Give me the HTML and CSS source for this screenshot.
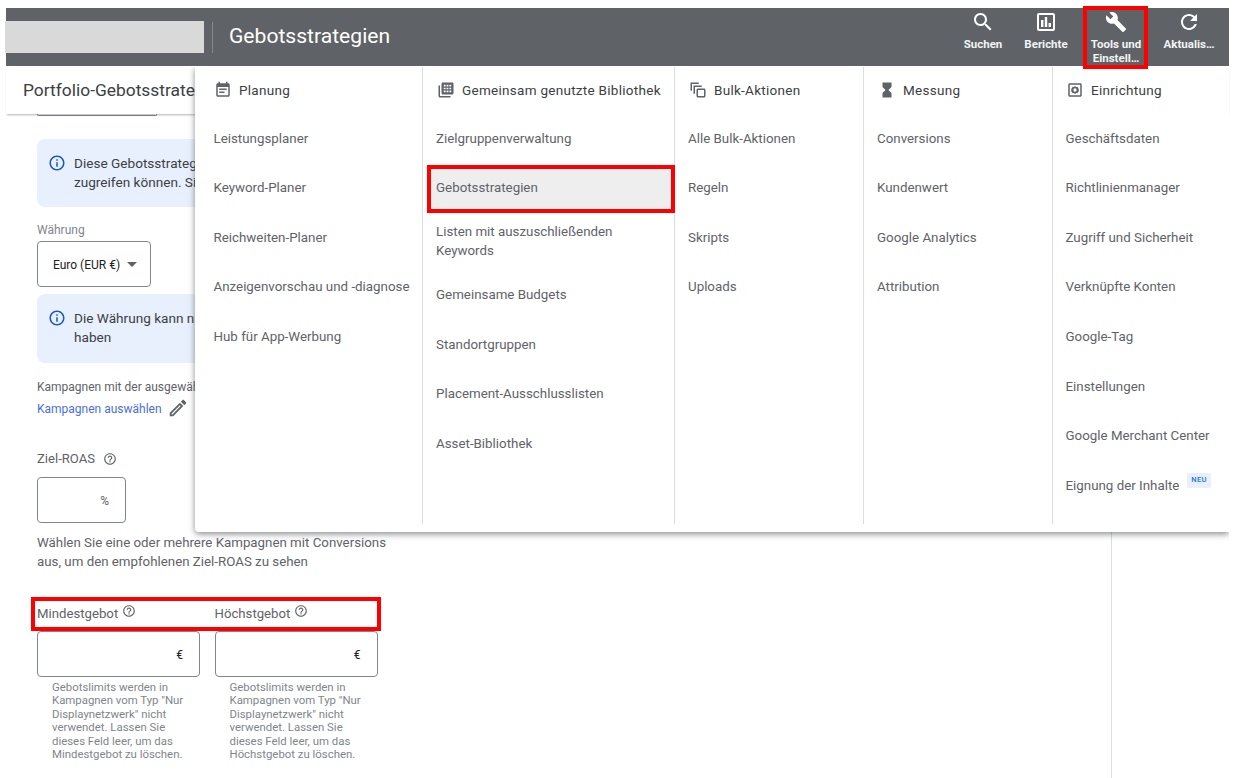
FILE: index.html
```html
<!DOCTYPE html>
<html lang="de">
<head>
<meta charset="utf-8">
<title>Gebotsstrategien</title>
<link rel="stylesheet" href="styles.css">
</head>
<body>
<svg class="sprite" width="0" height="0" aria-hidden="true">
  <symbol id="i-search" viewBox="0 0 24 24"><path d="M15.5 14h-.79l-.28-.27C15.41 12.59 16 11.11 16 9.5 16 5.91 13.09 3 9.5 3S3 5.91 3 9.5 5.91 16 9.5 16c1.61 0 3.09-.59 4.23-1.57l.27.28v.79l5 4.99L20.49 19l-4.99-5zm-6 0C7.01 14 5 11.99 5 9.5S7.01 5 9.5 5 14 7.01 14 9.5 11.99 14 9.5 14z"/></symbol>
  <symbol id="i-report" viewBox="0 0 24 24"><path d="M19 3H5c-1.1 0-2 .9-2 2v14c0 1.1.9 2 2 2h14c1.1 0 2-.9 2-2V5c0-1.1-.9-2-2-2zm0 16H5V5h14v14zM7 10h2.400v7H7zM10.800 7h2.400v10h-2.400zM14.600 13H17v4h-2.400z"/></symbol>
  <symbol id="i-build" viewBox="0 0 24 24"><path d="M22.7 19l-9.1-9.1c.9-2.3.4-5-1.5-6.9-2-2-5-2.4-7.4-1.3L9 6 6 9 1.6 4.7C.4 7.1.9 10.1 2.9 12.1c1.9 1.9 4.6 2.4 6.9 1.5l9.1 9.1c.4.4 1 .4 1.4 0l2.3-2.3c.5-.4.5-1.1.1-1.4z"/></symbol>
  <symbol id="i-refresh" viewBox="0 0 24 24"><path d="M17.65 6.35C16.2 4.9 14.21 4 12 4c-4.42 0-7.99 3.58-7.99 8s3.57 8 7.99 8c3.73 0 6.84-2.55 7.73-6h-2.08c-.82 2.33-3.04 4-5.65 4-3.31 0-6-2.69-6-6s2.69-6 6-6c1.66 0 3.14.69 4.22 1.78L13 11h7V4l-2.35 2.35z"/></symbol>
  <symbol id="i-plan" viewBox="0 0 24 24"><path d="M17 10H7v2h10v-2zm2-7h-1V1h-2v2H8V1H6v2H5c-1.11 0-1.99.9-1.99 2L3 19c0 1.1.89 2 2 2h14c1.1 0 2-.9 2-2V5c0-1.1-.9-2-2-2zm0 16H5V8h14v11zm-5-5H7v2h7v-2z"/></symbol>
  <symbol id="i-library" viewBox="0 0 24 24"><path d="M4 6H2v14c0 1.1.9 2 2 2h14v-2H4V6zM20 2H8c-1.1 0-2 .9-2 2v12c0 1.1.9 2 2 2h12c1.1 0 2-.9 2-2V4c0-1.1-.9-2-2-2zM9 5h2.5v2.2H9zm3.8 0h2.4v2.2h-2.4zm3.7 0H19v2.2h-2.5zM9 8.9h2.5v2.2H9zm3.8 0h2.4v2.2h-2.4zm3.7 0H19v2.2h-2.5zM9 12.8h2.5V15H9zm3.8 0h2.4V15h-2.4zm3.7 0H19V15h-2.5z" fill-rule="evenodd"/></symbol>
  <symbol id="i-bulk" viewBox="0 0 24 24"><path d="M12 10h8c1.1 0 2 .9 2 2v8c0 1.1-.9 2-2 2h-8c-1.1 0-2-.9-2-2v-8c0-1.100.9-2 2-2zm0 2v8h8v-8h-8zM6 6h11v2H8v9H6V6zM2 2h11v2H4v9H2V2z" fill-rule="evenodd"/></symbol>
  <symbol id="i-hourglass" viewBox="0 0 24 24"><path d="M6 2v6h.01L6 8.010 10 12l-4 4 .01.01H6V22h12v-5.990h-.01L18 16l-4-4 4-3.990-.01-.01H18V2H6z"/></symbol>
  <symbol id="i-setup" viewBox="0 0 24 24"><path d="M5 3h14c1.100 0 2 .9 2 2v14c0 1.100-.9 2-2 2H5c-1.100 0-2-.9-2-2V5c0-1.100.9-2 2-2zm0 2v14h14V5H5z" fill-rule="evenodd"/><path d="M12 6.500l1.300 1.500 2-.4.7 1.900 1.500 1.200-.9 1.300.9 1.300-1.500 1.200-.7 1.900-2-.4-1.300 1.500-1.300-1.500-2 .4-.7-1.900-1.500-1.200.9-1.300-.9-1.300 1.500-1.200.7-1.900 2 .4L12 6.500zM12 9.800a2.200 2.200 0 1 0 0 4.400 2.200 2.200 0 0 0 0-4.400z" fill-rule="evenodd"/></symbol>
  <symbol id="i-info" viewBox="0 0 24 24"><path d="M11 7h2v2h-2zm0 4h2v6h-2zm1-9C6.480 2 2 6.480 2 12s4.480 10 10 10 10-4.480 10-10S17.520 2 12 2zm0 18c-4.410 0-8-3.590-8-8s3.590-8 8-8 8 3.590 8 8-3.590 8-8 8z"/></symbol>
  <symbol id="i-help" viewBox="0 0 24 24"><path d="M11 18h2v-2h-2v2zm1-16C6.480 2 2 6.480 2 12s4.480 10 10 10 10-4.480 10-10S17.520 2 12 2zm0 18c-4.410 0-8-3.590-8-8s3.590-8 8-8 8 3.590 8 8-3.590 8-8 8zm0-14c-2.210 0-4 1.790-4 4h2c0-1.100.9-2 2-2s2 .9 2 2c0 2-3 1.750-3 5h2c0-2.250 3-2.500 3-5 0-2.210-1.790-4-4-4z"/></symbol>
  <symbol id="i-edit" viewBox="0 0 24 24"><path d="M14.060 9.020l.92.92L5.920 19H5v-.92l9.060-9.060M17.660 3c-.25 0-.51.1-.7.29l-1.830 1.830 3.750 3.750 1.830-1.830c.39-.39.39-1.020 0-1.410l-2.340-2.340c-.2-.2-.45-.29-.71-.29zm-3.600 3.190L3 17.250V21h3.750L17.810 9.940l-3.750-3.750z"/></symbol>
</svg>

<div class="frame">
  <header class="topbar">
    <div class="account-mask"></div>
    <div class="top-sep"></div>
    <div class="top-title">Gebotsstrategien</div>
    <nav class="top-nav">
      <a class="nav-btn nav-search"><svg class="nav-icon"><use href="#i-search"/></svg><span>Suchen</span></a>
      <a class="nav-btn nav-report"><svg class="nav-icon"><use href="#i-report"/></svg><span>Berichte</span></a>
      <a class="nav-btn nav-tools"><svg class="nav-icon"><use href="#i-build"/></svg><span>Tools und<br>Einstell…</span></a>
      <a class="nav-btn nav-refresh"><svg class="nav-icon"><use href="#i-refresh"/></svg><span>Aktualis…</span></a>
    </nav>
  </header>

  <div class="subbar"><span class="subbar-text">Portfolio-Gebotsstrategie</span></div>

  <main class="main">
    <section class="form">
      <div class="stub"></div>

      <div class="notice notice-first">
        <svg class="notice-icon"><use href="#i-info"/></svg>
        <p>Diese Gebotsstrategie<br>zugreifen können. Sie</p>
      </div>

      <div class="field-label">Währung</div>
      <div class="select">Euro (EUR €)<span class="caret"></span></div>

      <div class="notice notice-second">
        <svg class="notice-icon"><use href="#i-info"/></svg>
        <p>Die Währung kann nicht<br>haben</p>
      </div>

      <div class="campaign-note">Kampagnen mit der ausgewählten</div>
      <div class="campaign-link"><a>Kampagnen auswählen</a><svg class="edit-icon"><use href="#i-edit"/></svg></div>

      <div class="roas-label">Ziel-ROAS<svg class="help-icon"><use href="#i-help"/></svg></div>
      <div class="input input-roas"><span>%</span></div>
      <p class="roas-hint">Wählen Sie eine oder mehrere Kampagnen mit Conversions<br>aus, um den empfohlenen Ziel-ROAS zu sehen</p>

      <div class="limits">
        <div class="limit">
          <div class="limit-label">Mindestgebot<svg class="help-icon help-raised"><use href="#i-help"/></svg></div>
          <div class="input input-bid"><span>€</span></div>
          <p class="limit-hint">Gebotslimits werden in Kampagnen vom Typ "Nur Displaynetzwerk" nicht verwendet. Lassen Sie dieses Feld leer, um das Mindestgebot zu löschen.</p>
        </div>
        <div class="limit">
          <div class="limit-label">Höchstgebot<svg class="help-icon help-raised"><use href="#i-help"/></svg></div>
          <div class="input input-bid"><span>€</span></div>
          <p class="limit-hint">Gebotslimits werden in Kampagnen vom Typ "Nur Displaynetzwerk" nicht verwendet. Lassen Sie dieses Feld leer, um das Höchstgebot zu löschen.</p>
        </div>
        <div class="limits-mark"></div>
      </div>
    </section>
    <aside class="side"></aside>
  </main>

  <div class="tools-mark"></div>

  <div class="menu">
    <div class="col col-plan">
      <div class="col-head"><svg class="head-icon"><use href="#i-plan"/></svg>Planung</div>
      <a class="item">Leistungsplaner</a>
      <a class="item">Keyword-Planer</a>
      <a class="item">Reichweiten-Planer</a>
      <a class="item">Anzeigenvorschau und -diagnose</a>
      <a class="item">Hub für App-Werbung</a>
    </div>
    <div class="col col-lib">
      <div class="col-head"><svg class="head-icon"><use href="#i-library"/></svg>Gemeinsam genutzte Bibliothek</div>
      <a class="item">Zielgruppenverwaltung</a>
      <a class="item item-active"><span>Gebotsstrategien</span></a>
      <a class="item item-two">Listen mit auszuschließenden Keywords</a>
      <a class="item">Gemeinsame Budgets</a>
      <a class="item">Standortgruppen</a>
      <a class="item">Placement-Ausschlusslisten</a>
      <a class="item">Asset-Bibliothek</a>
    </div>
    <div class="col col-bulk">
      <div class="col-head"><svg class="head-icon"><use href="#i-bulk"/></svg>Bulk-Aktionen</div>
      <a class="item">Alle Bulk-Aktionen</a>
      <a class="item">Regeln</a>
      <a class="item">Skripts</a>
      <a class="item">Uploads</a>
    </div>
    <div class="col col-measure">
      <div class="col-head"><svg class="head-icon"><use href="#i-hourglass"/></svg>Messung</div>
      <a class="item">Conversions</a>
      <a class="item">Kundenwert</a>
      <a class="item">Google Analytics</a>
      <a class="item">Attribution</a>
    </div>
    <div class="col col-setup">
      <div class="col-head"><svg class="head-icon"><use href="#i-setup"/></svg>Einrichtung</div>
      <a class="item">Geschäftsdaten</a>
      <a class="item">Richtlinienmanager</a>
      <a class="item">Zugriff und Sicherheit</a>
      <a class="item">Verknüpfte Konten</a>
      <a class="item">Google-Tag</a>
      <a class="item">Einstellungen</a>
      <a class="item">Google Merchant Center</a>
      <a class="item">Eignung der Inhalte<span class="badge">NEU</span></a>
    </div>
  </div>
</div>
</body>
</html>
```

FILE: styles.css
```css
* { box-sizing: border-box; }

html, body {
  margin: 0;
  height: 100%;
  background: #fff;
  overflow: hidden;
  font-family: Roboto, "Liberation Sans", sans-serif;
}

.sprite { position: absolute; }

svg { fill: currentColor; display: block; }

.frame {
  position: relative;
  width: 1223px;
  height: 770px;
  margin: 8px 0 0 6px;
}

/* top bar */
.topbar {
  display: flex;
  align-items: center;
  height: 58px;
  background: #5f6368;
  color: #fff;
}

.account-mask {
  width: 199px;
  height: 32px;
  margin-left: -1px;
  background: #d9d9d9;
}

.top-sep {
  width: 1px;
  height: 31px;
  margin-left: 8px;
  background: #85888c;
}

.top-title {
  margin: -2px 0 0 16px;
  font-size: 21.1px;
  line-height: 28px;
  color: #fff;
}

.top-nav {
  display: flex;
  margin-left: auto;
  height: 58px;
}

.nav-btn {
  display: flex;
  flex-direction: column;
  align-items: center;
  padding-top: 2px;
  font-size: 11.5px;
  font-weight: 700;
  line-height: 14px;
  text-align: center;
  color: #f1f3f4;
}

.nav-icon {
  width: 24px;
  height: 24px;
  margin-bottom: 3px;
  color: #fff;
}

.nav-tools .nav-icon {
  width: 22px;
  height: 24px;
}

.nav-search { width: 60px; margin-right: 3px; }
.nav-report { width: 60px; margin-right: 10px; }
.nav-tools { width: 60px; margin-right: 13px; }
.nav-refresh { width: 60px; margin-right: 10px; }

/* page title strip */
.subbar {
  position: relative;
  z-index: 2;
  height: 48px;
  padding-left: 17px;
  font-size: 17.4px;
  line-height: 48px;
  color: #3c4043;
  background: #fff;
  box-shadow: 0 2px 2px -1px rgba(60, 64, 67, .4);
}

.subbar-text {
  display: block;
  width: 172px;
  overflow: hidden;
  white-space: nowrap;
}

/* body */
.main {
  display: flex;
  height: 664px;
}

.form {
  width: 1105px;
  padding-left: 31px;
  color: #5f6368;
}

.side {
  flex: 1;
  border-left: 1px solid #dadce0;
}

.stub {
  width: 120px;
  height: 2px;
  border: 1px solid #80868b;
  border-top: 0;
  border-radius: 0 0 4px 4px;
}

.notice {
  display: flex;
  width: 158px;
  height: 68px;
  padding: 15px 0 0 12px;
  overflow: hidden;
  background: #e8f0fe;
  border-radius: 8px 0 0 8px;
  color: #3c4043;
}

.notice p {
  margin: 0;
  font-size: 13.6px;
  line-height: 19px;
  white-space: nowrap;
}

.notice-icon {
  flex: none;
  width: 18px;
  height: 18px;
  margin: 0 8px 0 -1px;
  color: #1a56c4;
}

.notice-first { margin-top: 23px; }
.notice-second { margin-top: 7px; height: 69px; }

.field-label {
  margin-top: 15px;
  font-size: 12px;
  line-height: 16px;
  color: #80868b;
}

.select {
  display: flex;
  align-items: center;
  width: 114px;
  height: 46px;
  margin-top: 3px;
  padding: 2px 0 0 15px;
  border: 1px solid #80868b;
  border-radius: 4px;
  font-size: 12px;
  color: #202124;
}

.caret {
  margin: -2px 0 0 7px;
  border: 5px solid transparent;
  border-top-color: #5f6368;
  border-bottom-width: 0;
}

.campaign-note {
  width: 158px;
  margin-top: 16px;
  overflow: hidden;
  font-size: 12px;
  line-height: 16px;
  white-space: nowrap;
}

.campaign-link {
  display: flex;
  align-items: center;
  height: 24px;
  margin-top: 2px;
  font-size: 12px;
  color: #4a6fdc;
}

.edit-icon {
  width: 22px;
  height: 22px;
  margin: -2px 0 0 5px;
  color: #5f6368;
}

.roas-label {
  display: flex;
  align-items: center;
  margin-top: 29px;
  font-size: 13.1px;
  line-height: 18px;
  color: #5f6368;
}

.help-icon {
  width: 14px;
  height: 14px;
  margin-left: 8px;
  color: #5f6368;
}

.input {
  display: flex;
  align-items: center;
  justify-content: flex-end;
  height: 46px;
  border: 1px solid #80868b;
  border-radius: 4px;
  font-size: 12px;
  padding-top: 1px;
}

.input-roas {
  width: 89px;
  margin-top: 9px;
  padding-right: 16px;
}

.input-bid {
  width: 163px;
  padding-right: 16px;
  color: #202124;
}

.roas-hint {
  margin: 10px 0 0;
  font-size: 13.3px;
  line-height: 19px;
  white-space: nowrap;
}

.limits {
  position: relative;
  display: flex;
  gap: 14.5px;
  margin-top: 32px;
}

.limit { width: 163px; }

.limit-label {
  display: flex;
  align-items: center;
  height: 20px;
  margin-bottom: 8px;
  padding-top: 2px;
  font-size: 13.2px;
  line-height: 20px;
}

.help-raised {
  margin: -6px 0 0 4px;
}

.limit-hint {
  margin: 4px 0 0;
  padding: 0 12px 0 15px;
  font-size: 11.4px;
  line-height: 13.4px;
  color: #80868b;
}

.limits-mark {
  position: absolute;
  left: -6px;
  top: -6px;
  width: 350px;
  height: 34px;
  border: 4px solid #f00;
  pointer-events: none;
}

.tools-mark {
  position: absolute;
  left: 1077px;
  top: -2px;
  width: 65px;
  height: 63px;
  border: 4px solid #f00;
  z-index: 5;
  pointer-events: none;
}

/* tools menu */
.menu {
  position: absolute;
  z-index: 4;
  left: 189px;
  top: 59px;
  width: 1034px;
  height: 465px;
  display: flex;
  background: #fff;
  border-radius: 0 0 0 4px;
  box-shadow: 0 2px 6px rgba(60, 64, 67, .6);
  clip-path: inset(0 0 -12px -12px);
}

.col {
  flex: none;
  height: 457px;
  border-right: 1px solid #dadce0;
}

.col-plan { width: 228px; }
.col-lib { width: 252px; }
.col-bulk { width: 189px; }
.col-measure { width: 189px; }
.col-setup { width: 176px; border-right: 0; }

.col-head {
  display: flex;
  align-items: center;
  height: 45.6px;
  margin-bottom: 1px;
  padding-left: 14px;
  font-size: 13.5px;
  letter-spacing: .28px;
  color: #3c4043;
  white-space: nowrap;
}

.head-icon {
  flex: none;
  width: 18px;
  height: 18px;
  margin-right: 7px;
  color: #5f6368;
}

.col-plan .col-head { padding-left: 19px; }
.col-setup .col-head { padding-left: 13px; }

.item {
  position: relative;
  display: block;
  padding: 15px 4px 15px 13px;
  font-size: 13.33px;
  line-height: 19.6px;
  color: #5f6368;
}

.col-plan .item { padding-left: 18.5px; }
.col-setup .item { padding-left: 12.5px; }

.item-active span { position: relative; z-index: 1; }

.item-active::after {
  content: "";
  position: absolute;
  left: 4px;
  right: -1px;
  top: 2px;
  bottom: 0;
  background: #eee;
  border: 4px solid #f00;
}

.item-two { padding: 9px 4px 9px 13px; }

.badge {
  position: absolute;
  margin: -3px 0 0 8px;
  padding: 1.5px 4px;
  font-size: 7.5px;
  font-weight: 500;
  line-height: 12px;
  letter-spacing: .3px;
  color: #1a73e8;
  background: #e8f0fe;
  border-radius: 2px;
}
```
